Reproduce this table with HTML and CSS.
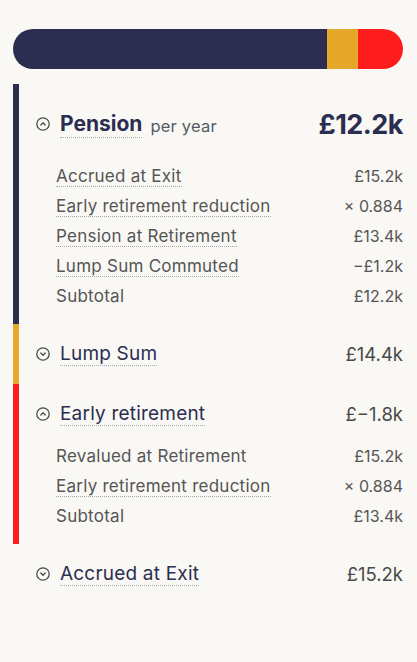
FILE: index.html
```html
<!DOCTYPE html>
<html>
<head>
<meta charset="utf-8">
<link rel="stylesheet" href="styles.css">
</head>
<body>
<div class="page">
  <div class="bar">
    <div class="seg seg-navy" style="width:80.5%"></div>
    <div class="seg seg-gold" style="width:8%"></div>
    <div class="seg seg-red" style="width:11.5%"></div>
  </div>

  <div class="breakdown">
    <section class="group navy">
      <div class="head head-main">
        <svg class="ico" viewBox="0 0 14 14"><circle cx="7" cy="7" r="6.2"/><path d="M4.8 8 L7 5.8 L9.2 8"/></svg>
        <span class="label big">Pension</span>
        <span class="per">per year</span>
        <span class="val big">£12.2k</span>
      </div>
      <div class="rows">
        <div class="row"><span class="rl dotted">Accrued at Exit</span><span class="rv">£15.2k</span></div>
        <div class="row"><span class="rl dotted">Early retirement reduction</span><span class="rv">× 0.884</span></div>
        <div class="row"><span class="rl dotted">Pension at Retirement</span><span class="rv">£13.4k</span></div>
        <div class="row"><span class="rl dotted">Lump Sum Commuted</span><span class="rv">−£1.2k</span></div>
        <div class="row"><span class="rl">Subtotal</span><span class="rv">£12.2k</span></div>
      </div>
    </section>

    <section class="group gold">
      <div class="head">
        <svg class="ico" viewBox="0 0 14 14"><circle cx="7" cy="7" r="6.2"/><path d="M4.8 6 L7 8.2 L9.2 6"/></svg>
        <span class="label">Lump Sum</span>
        <span class="val">£14.4k</span>
      </div>
    </section>

    <section class="group red">
      <div class="head">
        <svg class="ico" viewBox="0 0 14 14"><circle cx="7" cy="7" r="6.2"/><path d="M4.8 8 L7 5.8 L9.2 8"/></svg>
        <span class="label">Early retirement</span>
        <span class="val">£−1.8k</span>
      </div>
      <div class="rows">
        <div class="row"><span class="rl">Revalued at Retirement</span><span class="rv">£15.2k</span></div>
        <div class="row"><span class="rl dotted">Early retirement reduction</span><span class="rv">× 0.884</span></div>
        <div class="row"><span class="rl">Subtotal</span><span class="rv">£13.4k</span></div>
      </div>
    </section>

    <section class="group plain">
      <div class="head">
        <svg class="ico" viewBox="0 0 14 14"><circle cx="7" cy="7" r="6.2"/><path d="M4.8 6 L7 8.2 L9.2 6"/></svg>
        <span class="label">Accrued at Exit</span>
        <span class="val">£15.2k</span>
      </div>
    </section>
  </div>
</div>
</body>
</html>
```
FILE: styles.css
```css
html, body {
  margin: 0;
  padding: 0;
  background: #f9f8f5;
}
body {
  font-family: Inter, "Noto Sans", sans-serif;
  color: #2b2e50;
}
.page {
  padding: 29px 14px 0 13px;
}
.bar {
  display: flex;
  height: 40px;
  border-radius: 20px;
  overflow: hidden;
}
.seg { height: 100%; }
.seg-navy { background: #2b2e50; }
.seg-gold { background: #e5a82a; }
.seg-red { background: #ff1c1c; }

.breakdown {
  margin-top: 15px;
}
.group {
  border-left: 6px solid transparent;
  padding: 15px 0 15px 17px;
}
.group.navy { border-left-color: #2b2e50; padding-bottom: 13px; }
.group.gold { border-left-color: #e5a82a; }
.group.red { border-left-color: #ff1c1c; padding-bottom: 13px; }

.head {
  display: flex;
  align-items: center;
  height: 30px;
}
.head-main { height: 50px; }
.ico {
  width: 14px;
  height: 14px;
  margin-right: 10px;
  fill: none;
  stroke: #4a4a4a;
  stroke-width: 1.3;
  stroke-linecap: round;
  stroke-linejoin: round;
  flex: none;
}
.label {
  font-size: 19px;
  color: #2b2e50;
  border-bottom: 1px dotted #aaa;
  line-height: 23px;
  letter-spacing: 0.2px;
}
.label.big {
  font-size: 21px;
  font-weight: 700;
  line-height: 26px;
  letter-spacing: 0;
}
.per {
  font-size: 16.5px;
  color: #555a66;
  margin-left: 8px;
  margin-top: 4px;
  letter-spacing: 0.2px;
}
.val {
  margin-left: auto;
  font-size: 18.5px;
  color: #4a4a4a;
}
.val.big {
  font-size: 27px;
  font-weight: 700;
  color: #2b2e50;
  letter-spacing: -0.5px;
}
.rows {
  margin-top: 12px;
  padding-left: 20px;
}
.row {
  display: flex;
  justify-content: space-between;
  align-items: center;
  height: 30px;
  font-size: 16px;
  color: #555;
}
.rl {
  line-height: 20px;
  font-size: 17px;
  letter-spacing: 0.25px;
}
.rl.dotted { border-bottom: 1px dotted #aaa; }
.rv { color: #555; }
```
